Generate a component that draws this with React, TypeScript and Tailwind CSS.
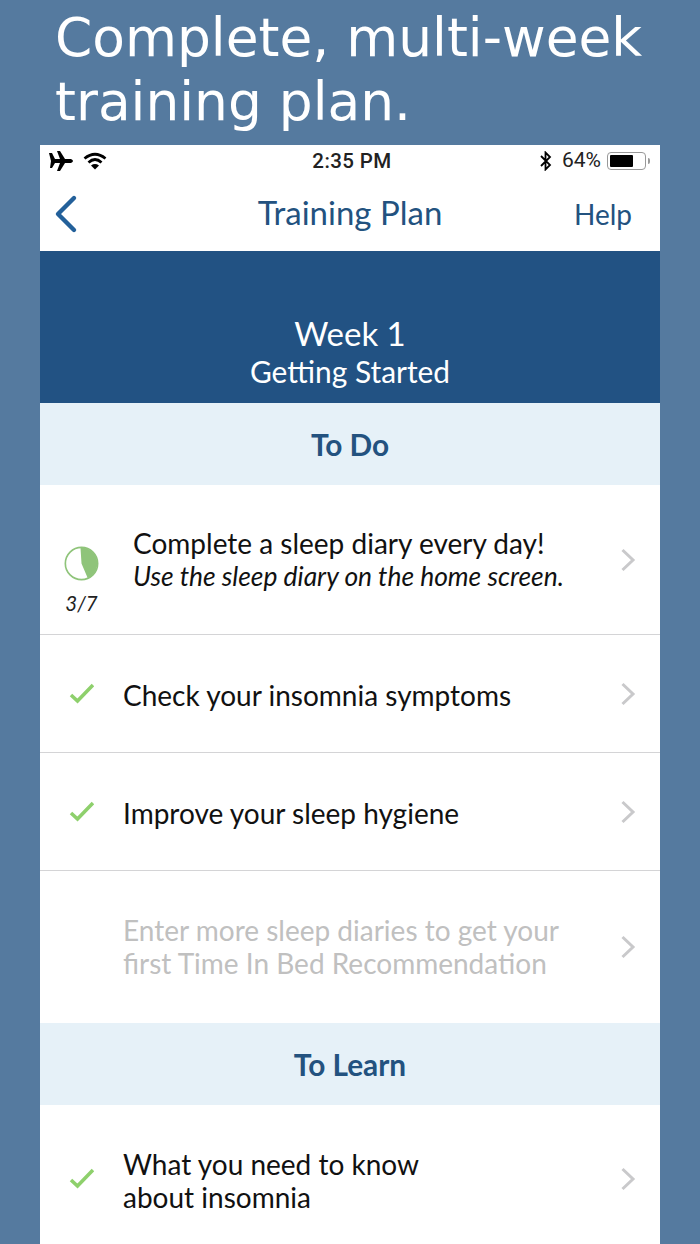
function Chevron() {
  return (
    <svg width="16" height="24" viewBox="0 0 16 24" className="shrink-0 mr-[24px]" fill="none" stroke="#c9c9cb" strokeWidth="3">
      <path d="M2.5 2 L13 12 L2.5 22" />
    </svg>
  );
}

function Check() {
  return (
    <svg width="26" height="22" viewBox="0 0 26 22" className="shrink-0">
      <path d="M3 12 L9.5 18 L25 2" fill="none" stroke="#8ed06c" strokeWidth="3.6" />
    </svg>
  );
}

function SectionHeader({ title }: { title: string }) {
  return (
    <div className="h-[82px] bg-[#e6f1f8] flex items-center justify-center pt-[2px] text-[29.8px] font-bold text-[#23527f]">
      {title}
    </div>
  );
}

function CheckRow({ title, height, border }: { title: React.ReactNode; height: string; border?: boolean }) {
  return (
    <div className={`${height} flex items-center pl-[28px] ${border ? "border-b border-[#d4d4d6]" : ""}`}>
      <Check />
      <div className="flex-1 pl-[29px] pt-[3px] text-[28px] leading-[33px] text-[#111]">{title}</div>
      <Chevron />
    </div>
  );
}

export default function App() {
  return (
    <div className="w-[700px] h-[1244px] overflow-hidden bg-[#557a9f] px-10 font-['Lato',sans-serif]">
      <div className="h-[145px] pl-[15px] pt-[6px] text-[53.4px] leading-[64px] text-white font-['DejaVu_Sans',sans-serif] whitespace-nowrap">
        Complete, multi-week
        <br />
        training plan.
      </div>

      <div className="bg-white">
        {/* status bar */}
        <div className="relative h-[32px] flex items-center justify-between pl-[9px] pr-[10px] text-[#222] font-['Roboto',sans-serif]">
          <div className="flex items-center gap-[10px]">
            <svg width="24" height="20" viewBox="0 0 24 20">
              <path d="M0 2 L3 2 L6 8 L11 8 L8 0 L11 0 L16 8 L22 8 Q24 9 24 10 Q24 11 22 12 L16 12 L11 20 L8 20 L11 12 L6 12 L3 17 L1 17 L2 10 Z" fill="#000" />
            </svg>
            <svg width="24" height="18" viewBox="0 0 24 18" fill="none" stroke="#000" strokeWidth="2.8">
              <path d="M1.5 6.5 Q12 -2 22.5 6.5" />
              <path d="M5.5 10.5 Q12 4.5 18.5 10.5" />
              <path d="M12 17.5 L8 13.4 Q12 10.5 16 13.4 Z" fill="#000" stroke="none" />
            </svg>
          </div>
          <span className="absolute left-[4px] right-0 text-center font-medium text-[20.5px] tracking-[0.4px]">2:35 PM</span>
          <div className="flex items-center">
            <svg width="14" height="20" viewBox="0 0 14 20" fill="none" stroke="#000" strokeWidth="1.8">
              <path d="M2 5 L11 14 L6.5 18.5 L6.5 1.5 L11 6 L2 15" />
            </svg>
            <span className="text-[21px] ml-[9px] mr-[6px]">64%</span>
            <div className="flex items-center">
              <div className="w-[39px] h-[18px] rounded-[4px] border border-[#999] p-[2px]">
                <div className="h-full w-[23px] bg-black rounded-[1px]" />
              </div>
              <div className="w-[2px] h-[6px] ml-[2px] bg-[#999] rounded-r-sm" />
            </div>
          </div>
        </div>

        {/* nav bar */}
        <div className="relative h-[74px] flex items-center justify-between pl-[4px] pr-[28px] text-[#23527f]">
          <svg width="40" height="40" viewBox="0 0 40 40" fill="none" stroke="#23609a" strokeWidth="4.4" strokeLinecap="round" strokeLinejoin="round">
            <path d="M30 4 L14 20 L30 36" />
          </svg>
          <span className="absolute left-0 right-0 text-center text-[33px] pb-[3px]">Training Plan</span>
          <span className="text-[28px]">Help</span>
        </div>

        {/* week banner */}
        <div className="h-[152px] bg-[#225283] text-white text-center pt-[63px]">
          <div className="text-[33px] leading-[38px]">Week 1</div>
          <div className="text-[29.9px] leading-[38px]">Getting Started</div>
        </div>

        <SectionHeader title="To Do" />

        <div className="h-[150px] flex items-center border-b border-[#d4d4d6]">
          <div className="w-[93px] shrink-0 flex flex-col items-center pr-[10px] pt-[41px]">
            <svg width="35" height="35" viewBox="0 0 34 34">
              <circle cx="17" cy="17" r="15.7" fill="#fff" stroke="#8fc47a" strokeWidth="1.6" />
              <path d="M17 17 L16 1.5 A15.5 15.5 0 0 1 23 31.2 Z" fill="#8fc47a" />
            </svg>
            <div className="text-[20.5px] italic text-[#222] mt-[10px] leading-[24px]">3/7</div>
          </div>
          <div className="flex-1 pt-[1px] text-[28px] leading-[33px] text-[#111] whitespace-nowrap">
            <div>Complete a sleep diary every day!</div>
            <div className="italic text-[26.4px]">Use the sleep diary on the home screen.</div>
          </div>
          <Chevron />
        </div>

        <CheckRow title="Check your insomnia symptoms" height="h-[118px]" border />
        <CheckRow title="Improve your sleep hygiene" height="h-[118px]" border />

        <div className="h-[152px] flex items-center pl-[83px]">
          <div className="flex-1 text-[28px] leading-[33px] text-[#c0c0c0]">
            Enter more sleep diaries to get your
            <br />
            first Time In Bed Recommendation
          </div>
          <Chevron />
        </div>

        <SectionHeader title="To Learn" />

        <CheckRow
          title={
            <>
              What you need to know
              <br />
              about insomnia
            </>
          }
          height="h-[148px]"
        />
      </div>
    </div>
  );
}
